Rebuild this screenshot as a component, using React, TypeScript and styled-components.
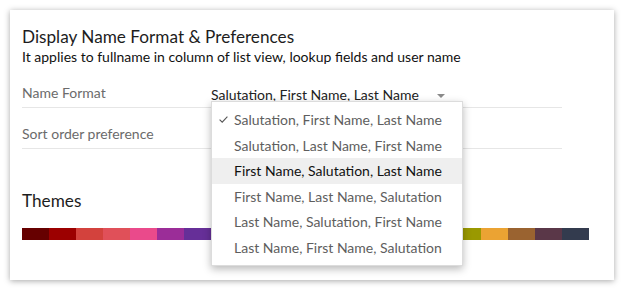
import React, { FC } from 'react'
import styled, { createGlobalStyle } from 'styled-components'

const GlobalStyle = createGlobalStyle`
  html, body {
    margin: 0;
    padding: 0;
    background: #fff;
    font-family: Lato, "Open Sans", sans-serif;
  }
  * { box-sizing: border-box; }
`

const Page = styled.div`
  padding: 10px 12px 11px 10px;
`

const Card = styled.section`
  position: relative;
  height: 270px;
  background: #fff;
  box-shadow: 0 1px 6px rgba(0, 0, 0, 0.35);
  padding: 17px 12px 0 12px;
`

const Title = styled.h2`
  margin: 0;
  font-size: 17.2px;
  line-height: 20px;
  font-weight: 400;
  color: #1d1d1d;
`

const Subtitle = styled.p`
  margin: 0;
  font-size: 14px;
  line-height: 20px;
  color: #111;
`

const Rows = styled.div`
  width: 540px;
`

const Row = styled.div`
  position: relative;
  display: flex;
  align-items: center;
  height: 41px;
  padding-top: 11px;
  border-bottom: 1px solid #e6e6e6;
`

const Label = styled.div`
  width: 189px;
  font-size: 14px;
  color: #6b6b6b;
`

const Select = styled.div`
  position: relative;
  display: flex;
  align-items: center;
  width: 234px;
  margin-top: 3px;
  font-size: 14px;
  color: #222;
`

const Caret = styled.span`
  position: absolute;
  right: 0;
  top: 8px;
  border-left: 4px solid transparent;
  border-right: 4px solid transparent;
  border-top: 4px solid #8a8a8a;
`

const Menu = styled.ul`
  position: absolute;
  left: 189px;
  top: 34px;
  z-index: 2;
  width: 252px;
  margin: 0;
  padding: 5px 0;
  list-style: none;
  background: #fff;
  border: 1px solid #dcdcdc;
  box-shadow: 0 3px 8px rgba(0, 0, 0, 0.28);
`

const Item = styled.li<{ $active?: boolean }>`
  position: relative;
  height: 25.5px;
  line-height: 25.5px;
  padding-left: 22px;
  font-size: 14px;
  color: ${(p) => (p.$active ? '#111' : '#5e5e5e')};
  background: ${(p) => (p.$active ? '#efefef' : 'transparent')};
  white-space: nowrap;
`

const Check = styled.svg`
  position: absolute;
  left: 7px;
  top: 9px;
`

const ThemesTitle = styled.h3`
  margin: 42px 0 0;
  font-size: 17.2px;
  line-height: 20px;
  font-weight: 400;
  color: #1d1d1d;
`

const Palette = styled.div`
  display: flex;
  margin-top: 17px;
`

const Swatch = styled.div<{ $c: string }>`
  width: 27px;
  height: 12px;
  background: ${(p) => p.$c};
`

const swatches = [
  '#660000', '#9c0000', '#d3423d', '#e05059', '#ea4a8b', '#9b2d98', '#662f98',
  '#3b3f9a', '#2a63b8', '#1c8ad4', '#1fa2c4', '#17998c', '#2d8f4e', '#5aa03c',
  '#8bb236', '#b6bf2a', '#9a9900', '#eba333', '#9a6330', '#5a3748', '#333b4e',
]

const options = [
  'Salutation, First Name, Last Name',
  'Salutation, Last Name, First Name',
  'First Name, Salutation, Last Name',
  'First Name, Last Name, Salutation',
  'Last Name, Salutation, First Name',
  'Last Name, First Name, Salutation',
]

const App: FC = () => {
  return (
    <Page>
      <GlobalStyle />
      <Card>
        <Title>Display Name Format &amp; Preferences</Title>
        <Subtitle>It applies to fullname in column of list view, lookup fields and user name</Subtitle>
        <Rows>
          <Row>
            <Label>Name Format</Label>
            <Select>
              Salutation, First Name, Last Name
              <Caret />
            </Select>
            <Menu>
              {options.map((o, i) => (
                <Item key={o} $active={i === 2}>
                  {i === 0 && (
                    <Check width="9" height="7" viewBox="0 0 9 7">
                      <path d="M0.6 3.6 L3.2 6.1 L8.4 0.7" fill="none" stroke="#555" strokeWidth="1.1" />
                    </Check>
                  )}
                  {o}
                </Item>
              ))}
            </Menu>
          </Row>
          <Row>
            <Label>Sort order preference</Label>
          </Row>
        </Rows>
        <ThemesTitle>Themes</ThemesTitle>
        <Palette>
          {swatches.map((c, i) => (
            <Swatch key={i} $c={c} />
          ))}
        </Palette>
      </Card>
    </Page>
  )
}

export default App
